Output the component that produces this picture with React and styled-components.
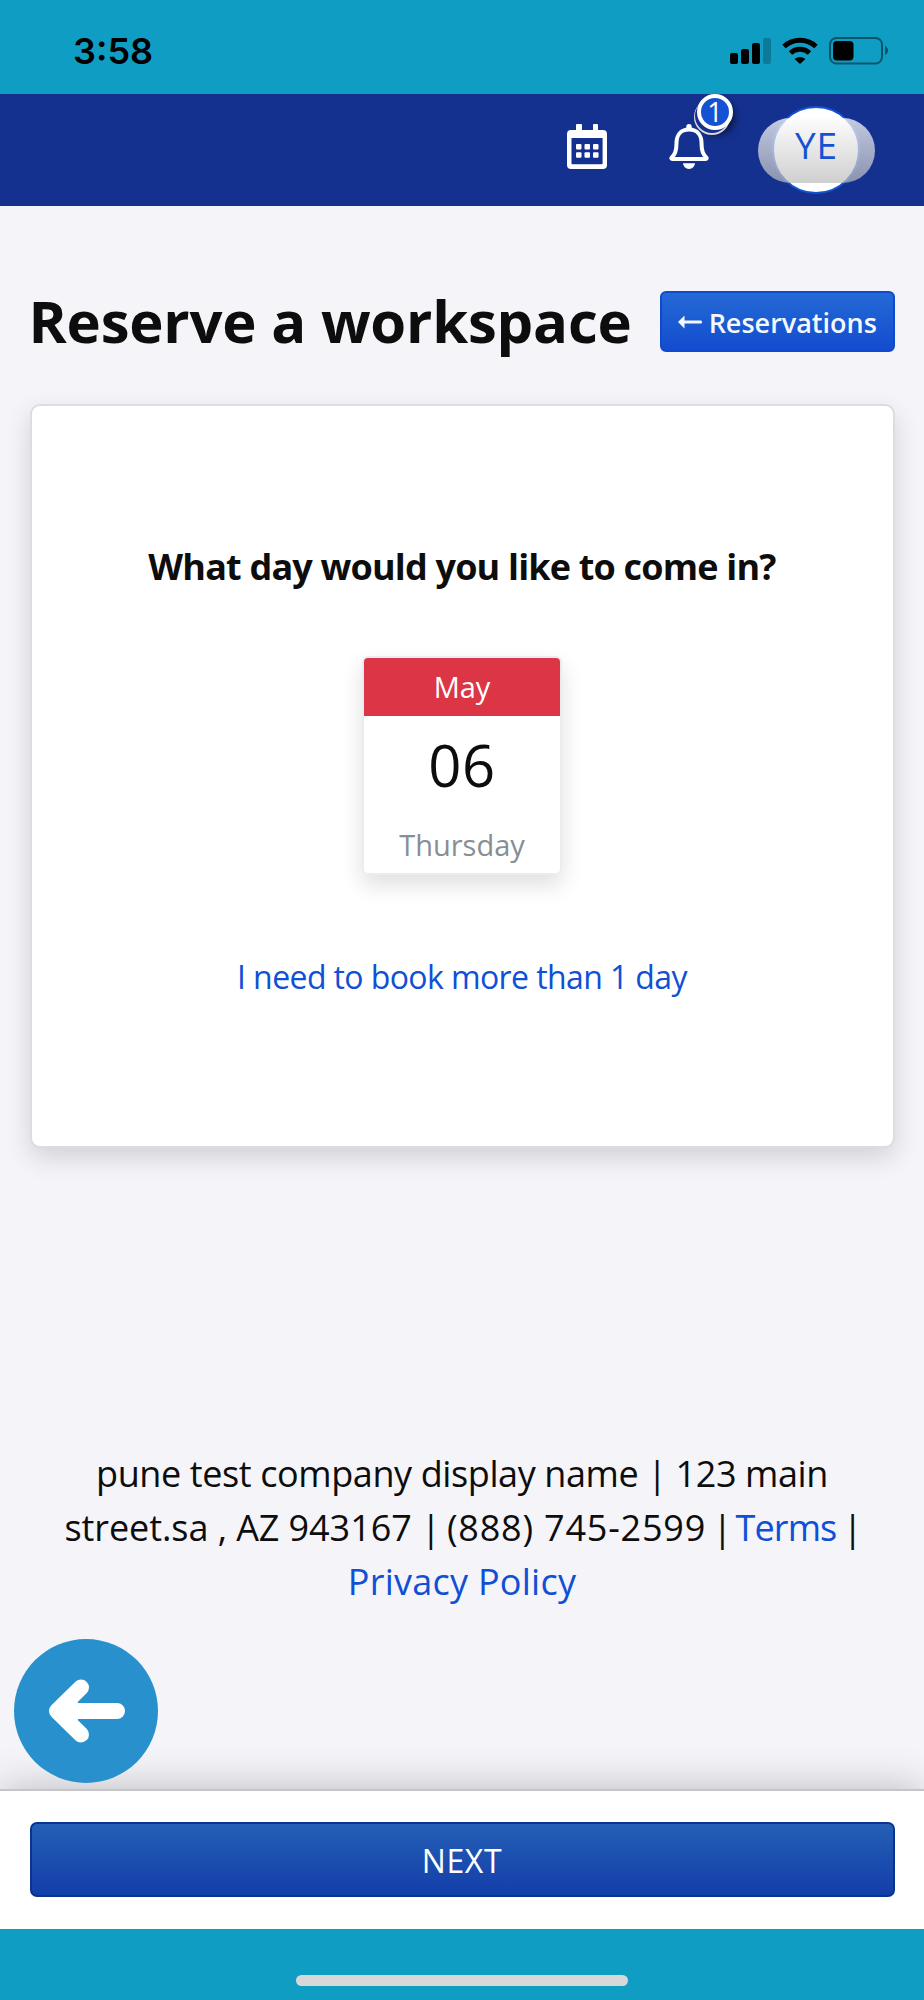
import React from 'react';
import styled, { createGlobalStyle } from 'styled-components';

const GlobalStyle = createGlobalStyle`
  * {
    box-sizing: border-box;
  }

  body {
    margin: 0;
    background-color: #F4F4F9;
    font-family: "Open Sans", "Noto Sans", sans-serif;
    color: #0D0D0D;
  }

  a {
    color: #0F50D5;
    text-decoration: none;
  }
`;

const Container = styled.div`
  display: flex;
  flex-direction: column;
  width: 924px;
  height: 2000px;
  overflow: hidden;
`;

const StatusBar = styled.div`
  display: flex;
  flex-shrink: 0;
  justify-content: space-between;
  height: 94px;
  padding: 0 35px 0 73px;
  background-color: #109DC4;
`;

const Clock = styled.div`
  font-family: Inter, sans-serif;
  font-size: 36px;
  font-weight: 600;
  line-height: 44px;
  margin-top: 29px;
  color: #000000;
`;

const StatusIcons = styled.svg`
  width: 160px;
  height: 30px;
  margin-top: 36px;
`;

const Header = styled.header`
  display: flex;
  flex-shrink: 0;
  justify-content: flex-end;
  height: 112px;
  padding-right: 49px;
  background-color: #15318F;
`;

const CalendarIcon = styled.svg`
  width: 40px;
  height: 45px;
  margin-top: 30px;
`;

const BellButton = styled.div`
  position: relative;
  margin: 30px 49px 0 62px;
  width: 40px;
  height: 45px;
`;

const Badge = styled.div`
  position: absolute;
  left: 28px;
  top: -30px;
  display: flex;
  align-items: center;
  justify-content: center;
  width: 36px;
  height: 36px;
  border: 4px solid #FFFFFF;
  border-radius: 50%;
  background-color: #1552D3;
  box-shadow: -3px 4px 0 -1px #15318F, -3px 5px 0 0 #D8D8D8, 2px 5px 7px rgba(0, 0, 0, 0.55);
  color: #FFFFFF;
  font-size: 27px;
  font-weight: 400;
  line-height: 28px;
`;

const AvatarPill = styled.div`
  display: flex;
  justify-content: center;
  align-items: center;
  position: relative;
  width: 117px;
  height: 65px;
  margin-top: 24px;
`;

const AvatarCircle = styled.div`
  flex-shrink: 0;
  width: 88px;
  height: 88px;
  margin: -2px 1px 0 0;
  border: 2px solid #1552D3;
  border-radius: 50%;
  background-color: #FFFFFF;
`;

const AvatarShade = styled.div`
  position: absolute;
  inset: 0;
  border-radius: 33px;
  background: linear-gradient(rgba(252, 252, 252, 0.75), rgba(187, 187, 187, 0.7));
  color: #1552D3;
  font-size: 37px;
  font-weight: 400;
  letter-spacing: 1px;
  line-height: 53px;
  text-align: center;
`;

const Main = styled.main`
  display: flex;
  flex-direction: column;
  height: 1583px;
  flex-shrink: 0;
  padding: 85px 29.5px 0;
`;

const TitleRow = styled.div`
  display: flex;
  justify-content: space-between;
  height: 61px;
`;

const Title = styled.h1`
  margin: -1px 0 0 -1px;
  font-size: 58px;
  font-weight: 700;
  line-height: 62px;
  letter-spacing: -0.2px;
  white-space: nowrap;
`;

const BackLink = styled.button`
  display: flex;
  align-items: center;
  justify-content: center;
  gap: 7px;
  width: 234.5px;
  height: 61px;
  padding: 1px 0 0;
  border: 2px solid #0E49CF;
  border-radius: 6px;
  background: linear-gradient(#246AD5, #134CCF);
  color: #F4F8FF;
  font-family: inherit;
  font-size: 27px;
  font-weight: 600;
`;

const Card = styled.section`
  display: flex;
  flex-direction: column;
  align-items: center;
  height: 744px;
  margin-top: 52px;
  border: 2px solid #DDDDDF;
  border-radius: 10px;
  background-color: #FFFFFF;
  box-shadow: 0 10px 26px rgba(0, 0, 0, 0.14);
`;

const Question = styled.h2`
  margin: 136px 0 0;
  font-size: 36px;
  font-weight: 700;
  line-height: 50px;
  letter-spacing: -0.82px;
  white-space: nowrap;
`;

const DateTile = styled.div`
  width: 200px;
  height: 219px;
  margin-top: 64px;
  border: 2px solid #E9EDF1;
  border-radius: 6px;
  overflow: hidden;
  box-shadow: 0 10px 22px rgba(0, 0, 0, 0.13);
  text-align: center;
`;

const Month = styled.div`
  height: 58px;
  background-color: #DC3545;
  color: #FFFFFF;
  font-size: 29px;
  line-height: 58px;
`;

const Day = styled.div`
  font-size: 58px;
  line-height: 98px;
  height: 99px;
  letter-spacing: 0.5px;
`;

const Weekday = styled.div`
  color: #868E96;
  font-size: 29px;
  line-height: 59px;
`;

const MoreDays = styled.a`
  margin-top: 82px;
  font-size: 32px;
  line-height: 40px;
  letter-spacing: -0.6px;
  white-space: nowrap;
`;

const Footer = styled.footer`
  display: flex;
  flex-direction: column;
  margin-top: 299px;
  font-size: 36px;
  line-height: 54px;
  text-align: center;
`;

const FooterLine = styled.div`
  white-space: nowrap;
  letter-spacing: ${props => props.$spacing || 0}px;
`;

const Phone = styled.span`
  margin-left: -3px;
  letter-spacing: 0.8px;
`;

const Divider = styled.span`
  letter-spacing: -3px;
  white-space: pre;
`;

const TermsLink = styled.a`
  letter-spacing: -0.9px;
`;

const BackCircle = styled.button`
  flex-shrink: 0;
  width: 144px;
  height: 144px;
  margin: 30px 0 0 -16px;
  padding: 0;
  border: 0;
  border-radius: 50%;
  background-color: #2890CD;
  position: relative;
  z-index: 1;
`;

const BottomBar = styled.div`
  flex-shrink: 0;
  height: 140px;
  padding: 31px 29.5px 0;
  border-top: 2px solid #C6C6C8;
  background-color: #FFFFFF;
  box-shadow: 0 0 40px rgba(0, 0, 0, 0.24);
`;

const NextButton = styled.button`
  display: block;
  width: 865px;
  height: 75px;
  padding: 1px 0 0;
  border: 2px solid #08338F;
  border-radius: 7px;
  background: linear-gradient(#245FB5, #133EAA);
  color: #FFFFFF;
  font-family: inherit;
  font-size: 32px;
  font-weight: 400;
  letter-spacing: 0.6px;
`;

const HomeArea = styled.div`
  display: flex;
  justify-content: center;
  flex-grow: 1;
  padding-top: 46px;
  background-color: #109DC4;
  position: relative;
`;

const HomeIndicator = styled.div`
  width: 332px;
  height: 11px;
  border-radius: 6px;
  background-color: #D8D8D8;
`;

function App() {
  return (
    <Container>
      <GlobalStyle />
      <StatusBar>
        <Clock>3:58</Clock>
        <StatusIcons viewBox="0 0 160 30">
          <rect x="1" y="17" width="8" height="11" rx="2" />
          <rect x="12" y="13" width="8" height="15" rx="2" />
          <rect x="23" y="7" width="8" height="21" rx="2" />
          <rect x="34" y="2" width="8" height="26" rx="2" opacity="0.22" />
          <g fill="none" stroke="#000000" strokeWidth="5">
            <path d="M55 10.5a23.5 23.5 0 0 1 32 0" />
            <path d="M61.5 17a14 14 0 0 1 19 0" />
          </g>
          <path d="M65.5 23q5.500-4 11 0l-5.500 5z" />
          <rect x="101" y="2" width="52" height="25.500" rx="6.500" fill="none" stroke="#000000" strokeWidth="2" opacity="0.45" />
          <rect x="104" y="5" width="20.500" height="19.500" rx="4" />
          <path d="M156 10q3 1.500 3 4.500t-3 4.500z" opacity="0.45" />
        </StatusIcons>
      </StatusBar>

      <Header>
        <CalendarIcon viewBox="0 0 40 45">
          <path
            fill="#FFFFFF"
            fillRule="evenodd"
            d="M10 0h4q1 0 1 1v5h11V1q0-1 1-1h3q1 0 1 1v5h5q4 0 4 4v31q0 4-4 4H4q-4 0-4-4V10q0-4 4-4h5V1q0-1 1-1zM4.500 14v25.500q0 .8.800.8h29.500q.8 0 .8-.8V14z"
          />
          <g fill="#FFFFFF">
            <rect x="9" y="20" width="5.500" height="5.500" rx="1" />
            <rect x="17.500" y="20" width="5.500" height="5.500" rx="1" />
            <rect x="26" y="20" width="5.500" height="5.500" rx="1" />
            <rect x="9" y="28.300" width="5.500" height="5.500" rx="1" />
            <rect x="17.500" y="28.300" width="5.500" height="5.500" rx="1" />
            <rect x="26" y="28.300" width="5.500" height="5.500" rx="1" />
          </g>
        </CalendarIcon>
        <BellButton>
          <svg width="40" height="45" viewBox="0 0 40 45">
            <path
              fill="none"
              stroke="#FFFFFF"
              strokeWidth="4"
              strokeLinejoin="round"
              d="M20 5.500C11.500 5.500 7.500 11.500 7.500 19c0 9-2 11.500-4.700 14.300-.8.900-.5 1.700.7 1.700h33c1.200 0 1.500-.8.700-1.700C34.500 30.500 32.500 28 32.500 19 32.500 11.500 28.500 5.500 20 5.500z"
            />
            <path fill="#FFFFFF" d="M17.300 5V2.700a2.700 2.700 0 0 1 5.400 0V5zM14 39.300h12a6 5.700 0 0 1-12 0z" />
          </svg>
          <Badge>1</Badge>
        </BellButton>
        <AvatarPill>
          <AvatarCircle />
          <AvatarShade>YE</AvatarShade>
        </AvatarPill>
      </Header>

      <Main>
        <TitleRow>
          <Title>Reserve a workspace</Title>
          <BackLink>
            <svg width="24" height="16" viewBox="0 0 24 16">
              <path fill="#F4F8FF" d="M0 8L6.500 1.500V6.500H23q1 0 1 1.500t-1 1.500H6.500v5z" />
            </svg>
            Reservations
          </BackLink>
        </TitleRow>

        <Card>
          <Question>What day would you like to come in?</Question>
          <DateTile>
            <Month>May</Month>
            <Day>06</Day>
            <Weekday>Thursday</Weekday>
          </DateTile>
          <MoreDays href="#">I need to book more than 1 day</MoreDays>
        </Card>

        <Footer>
          <FooterLine $spacing={-0.4}>pune test company display name | 123 main</FooterLine>
          <FooterLine $spacing={-0.08}>
            street.sa , AZ 943167 | <Phone>(888) 745-2599</Phone>
            <Divider> | </Divider>
            <TermsLink href="#">Terms</TermsLink>
            <Divider> |</Divider>
          </FooterLine>
          <FooterLine $spacing={0.25}><a href="#">Privacy Policy</a></FooterLine>
        </Footer>

        <BackCircle aria-label="Back">
          <svg width="144" height="144" viewBox="0 0 144 144">
            <path
              fill="none"
              stroke="#FFFFFF"
              strokeWidth="16"
              strokeLinecap="round"
              strokeLinejoin="round"
              d="M103 72H44M67 48.500L43 72l24 23.500M46 72l10-8v16z"
            />
          </svg>
        </BackCircle>
      </Main>

      <BottomBar>
        <NextButton>NEXT</NextButton>
      </BottomBar>
      <HomeArea>
        <HomeIndicator />
      </HomeArea>
    </Container>
  );
}

export default App;
